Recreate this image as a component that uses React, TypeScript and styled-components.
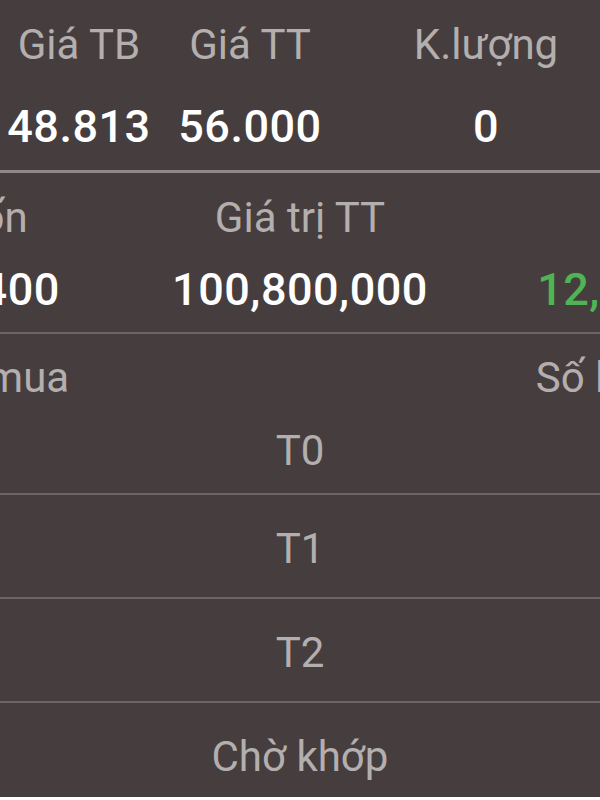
import React from 'react';
import styled, { createGlobalStyle } from 'styled-components';

const GlobalStyle = createGlobalStyle`
  html, body {
    margin: 0;
    padding: 0;
    background: #ffffff;
  }
  body {
    font-family: Roboto, "Liberation Sans", sans-serif;
  }
`;

interface Cell {
  label: string;
  value: string;
  tone?: 'plain' | 'up';
}

const topCells: Cell[] = [
  { label: 'Giá TB', value: '48.813' },
  { label: 'Giá TT', value: '56.000' },
  { label: 'K.lượng', value: '0' },
];

const valueCells: Cell[] = [
  { label: 'Giá vốn', value: '9,372,400' },
  { label: 'Giá trị TT', value: '100,800,000' },
  { label: '', value: '12,950,000', tone: 'up' },
];

const rows = ['T0', 'T1', 'T2', 'Chờ khớp'];

const App: React.FC = () => {
  return (
    <>
      <GlobalStyle />
      <Screen>
        <Summary $columns="158px 184px 288px" $shift={0} $height={170} $gap={34}>
          {topCells.map((c) => (
            <SummaryCell key={c.label}>
              <Label>{c.label}</Label>
              <Value $tone={c.tone}>{c.value}</Value>
            </SummaryCell>
          ))}
        </Summary>
        <Divider $thick />
        <Summary $columns="356px 328px 376px" $shift={-220} $height={159} $gap={24}>
          {valueCells.map((c) => (
            <SummaryCell key={c.value}>
              <Label>{c.label || '\u00a0'}</Label>
              <Value $tone={c.tone}>{c.value}</Value>
            </SummaryCell>
          ))}
        </Summary>
        <Divider />
        <ListHeader>
          <HeaderText $lead={-120} $trail={0}>Ngày mua</HeaderText>
          <HeaderText $lead={0} $trail={-102}>Số lượng</HeaderText>
        </ListHeader>
        {rows.map((r, i) => (
          <React.Fragment key={r}>
            <ListRow $first={i === 0}>{r}</ListRow>
            {i < rows.length - 1 && <Divider />}
          </React.Fragment>
        ))}
      </Screen>
    </>
  );
};

const Screen = styled.div`
  width: 600px;
  height: 797px;
  overflow: hidden;
  background: #463e3e;
  display: flex;
  flex-direction: column;
`;

const Summary = styled.div<{ $columns: string; $shift: number; $height: number; $gap: number }>`
  display: grid;
  grid-template-columns: ${(p) => p.$columns};
  margin-left: ${(p) => p.$shift}px;
  height: ${(p) => p.$height}px;
  flex-shrink: 0;
  box-sizing: border-box;
  padding-top: 21px;

  & > div {
    gap: ${(p) => p.$gap}px;
  }
`;

const SummaryCell = styled.div`
  display: flex;
  flex-direction: column;
  align-items: center;
  white-space: nowrap;
`;

const Label = styled.div`
  font-size: 42px;
  line-height: 48px;
  color: #b4afaf;
`;

const Value = styled.div<{ $tone?: 'plain' | 'up' }>`
  font-size: 45px;
  line-height: 48px;
  font-weight: 500;
  letter-spacing: 0.5px;
  color: ${(p) => (p.$tone === 'up' ? '#4fb454' : '#ffffff')};
`;

const Divider = styled.div<{ $thick?: boolean }>`
  flex-shrink: 0;
  height: ${(p) => (p.$thick ? 3 : 2)}px;
  background: ${(p) => (p.$thick ? '#8f8989' : '#6b6464')};
`;

const ListHeader = styled.div`
  display: flex;
  justify-content: space-between;
  height: 70px;
  flex-shrink: 0;
  box-sizing: border-box;
  padding-top: 20px;
  white-space: nowrap;
`;

const HeaderText = styled.div<{ $lead: number; $trail: number }>`
  font-size: 42px;
  line-height: 48px;
  color: #b4afaf;
  margin-left: ${(p) => p.$lead}px;
  margin-right: ${(p) => p.$trail}px;
`;

const ListRow = styled.div<{ $first?: boolean }>`
  flex-shrink: 0;
  height: ${(p) => (p.$first ? 89 : 102)}px;
  display: flex;
  align-items: center;
  justify-content: center;
  padding-top: 4px;
  box-sizing: border-box;
  font-size: 42px;
  color: #b4afaf;
`;

export default App;
